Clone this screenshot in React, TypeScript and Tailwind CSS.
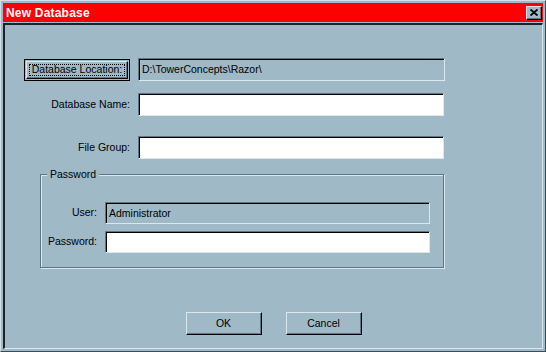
import React from "react";

const FACE = "bg-[#9fb9c7]";

function Sunken({ w, h, white, children }: { w: string; h: string; white?: boolean; children?: React.ReactNode }) {
    return (
        <div
            className={`${w} ${h} border border-t-[#5d7686] border-l-[#5d7686] border-r-[#dbe7ee] border-b-[#dbe7ee] ${white ? "bg-white" : FACE} shadow-[inset_1px_1px_0_#000] flex items-center pl-[3px] pt-px text-[10.5px] text-black`}
        >
            {children}
        </div>
    );
}

function PushButton({ label }: { label: string }) {
    return (
        <button className="w-[76px] h-[23px] border border-t-[#dbe7ee] border-l-[#dbe7ee] border-r-black border-b-black shadow-[inset_-1px_-1px_0_#5d7686] bg-[#9fb9c7] text-[10.5px] text-black flex items-center justify-center">
            {label}
        </button>
    );
}

export default function App() {
    return (
        <div
            className="w-[546px] h-[352px] bg-[#9fb9c7] border border-t-[#d3e0e8] border-l-[#d3e0e8] border-r-[#3c4c58] border-b-[#3c4c58] pt-[2px] pl-[2px] pr-[2px] pb-[2px] flex flex-col"
            style={{ fontFamily: '"Liberation Sans", Arial, sans-serif' }}
        >
            {/* title bar */}
            <div className="h-[19px] bg-[#ff0000] flex items-center justify-between pl-[3px] pr-px shrink-0">
                <span className="text-white font-bold text-[12px] tracking-[0.2px]">New Database</span>
                <div className="w-[16px] h-[14px] bg-[#9fb9c7] border border-t-[#dbe7ee] border-l-[#dbe7ee] border-r-black border-b-black shadow-[inset_-1px_-1px_0_#5d7686] flex items-center justify-center">
                    <svg width="8" height="7" viewBox="0 0 8 7">
                        <path d="M0.5 0.5 L7.5 6.5 M7.5 0.5 L0.5 6.5" stroke="#000" strokeWidth="1.8" fill="none" />
                    </svg>
                </div>
            </div>

            {/* client area */}
            <div className="mt-px flex-1 border-2 border-t-[#1c2228] border-l-[#1c2228] border-r-[#dbe7ee] border-b-[#dbe7ee] border-r border-b flex flex-col">
                <div className="mt-[33px] ml-[19px] flex items-center gap-[8px]">
                    <div className="w-[106px] h-[22px] border border-black bg-[#9fb9c7] p-px">
                        <div className="w-full h-full border border-t-[#dbe7ee] border-l-[#dbe7ee] border-r-black border-b-black shadow-[inset_-1px_-1px_0_#5d7686] p-[2px]">
                            <div className="w-full h-full border border-dotted border-black flex items-center justify-center text-[10.5px] text-black">
                                Database Location:
                            </div>
                        </div>
                    </div>
                    <Sunken w="w-[307px]" h="h-[23px]">D:\TowerConcepts\Razor\</Sunken>
                </div>

                <div className="mt-[12px] ml-[19px] flex items-center gap-[8px]">
                    <div className="w-[106px] text-right text-[10.5px] text-black">Database Name:</div>
                    <Sunken w="w-[306px]" h="h-[23px]" white />
                </div>

                <div className="mt-[20px] ml-[19px] flex items-center gap-[8px]">
                    <div className="w-[106px] text-right text-[10.5px] text-black">File Group:</div>
                    <Sunken w="w-[306px]" h="h-[23px]" white />
                </div>

                {/* password group */}
                <div className="relative mt-[15px] ml-[35px] w-[404px] h-[94px] border border-[#5d7686] shadow-[1px_1px_0_#dbe7ee,inset_1px_1px_0_#dbe7ee] pt-[27px] pl-[4px]">
                    <span className="absolute -top-[8px] left-[6px] bg-[#9fb9c7] px-[3px] text-[10.5px] text-black">Password</span>
                    <div className="flex items-center gap-[8px]">
                        <div className="w-[52px] text-right text-[10.5px] text-black">User:</div>
                        <Sunken w="w-[325px]" h="h-[22px]">Administrator</Sunken>
                    </div>
                    <div className="mt-[7px] flex items-center gap-[8px]">
                        <div className="w-[52px] text-right text-[10.5px] text-black">Password:</div>
                        <Sunken w="w-[325px]" h="h-[22px]" white />
                    </div>
                </div>

                <div className="mt-[44px] flex justify-center gap-[24px]">
                    <PushButton label="OK" />
                    <PushButton label="Cancel" />
                </div>
            </div>
        </div>
    );
}
